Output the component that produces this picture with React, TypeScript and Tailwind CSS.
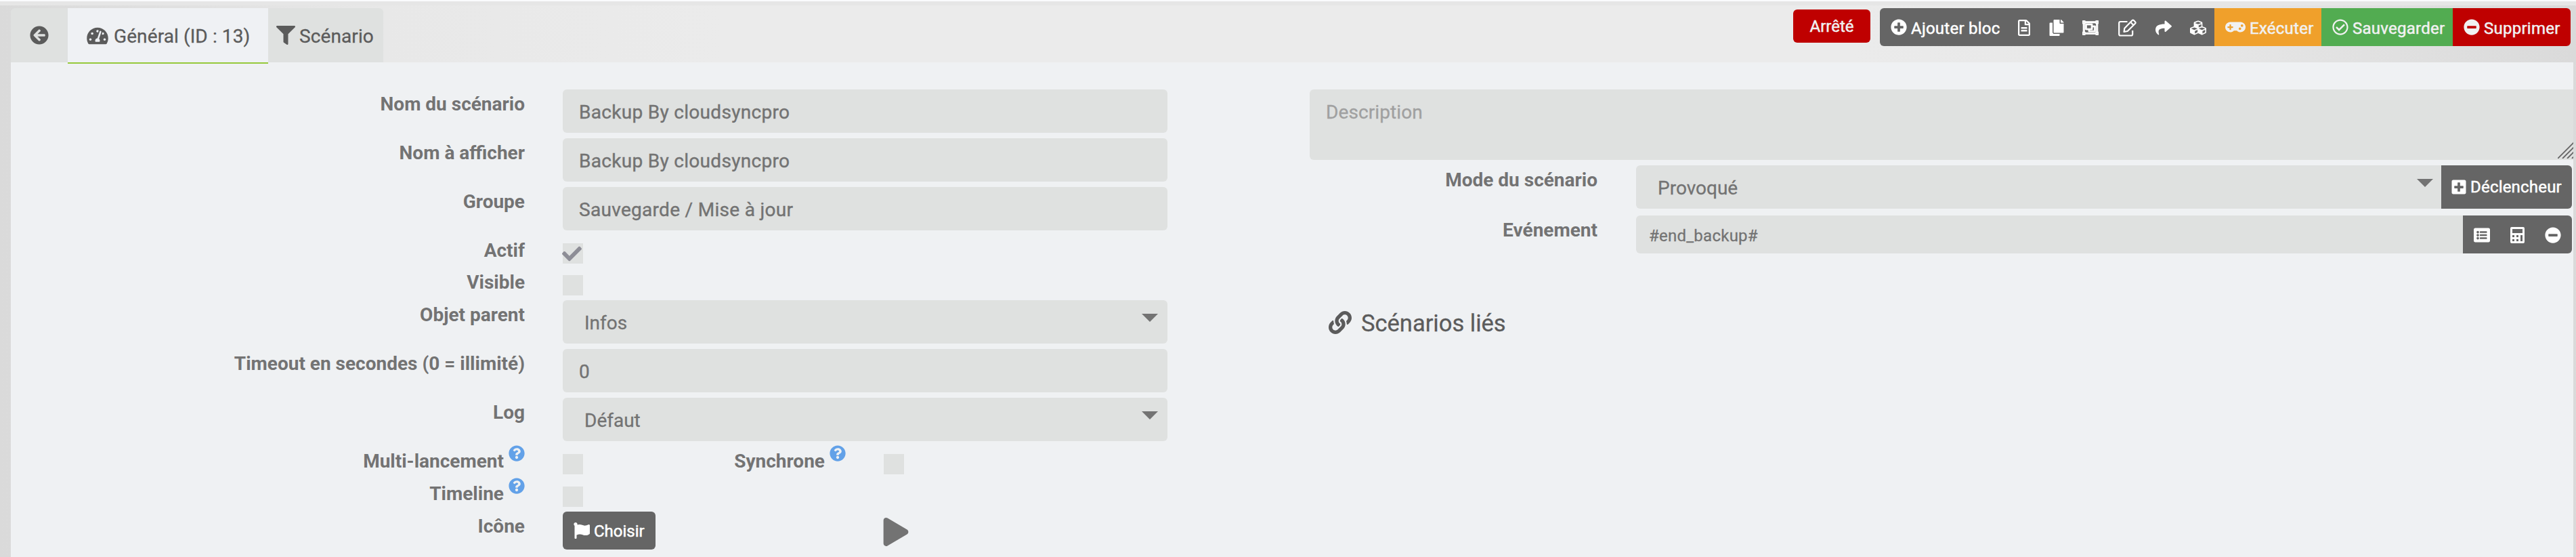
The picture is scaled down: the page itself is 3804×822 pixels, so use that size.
import type { ReactNode } from 'react';
import {
  FaArrowCircleLeft, FaTachometerAlt, FaFilter, FaPlusCircle, FaRegFileAlt, FaCopy, FaRegObjectGroup,
  FaShare, FaCubes, FaGamepad, FaRegCheckCircle, FaMinusCircle, FaQuestionCircle, FaFlag, FaPlay,
  FaPlusSquare, FaListAlt, FaLink, FaCheck,
} from 'react-icons/fa';

function EditIcon() {
  return (
    <svg viewBox="0 0 27 26" className="h-[26px] w-[27px]" fill="none" stroke="currentColor" strokeWidth="2.2" strokeLinejoin="round">
      <path d="M13.5 4H3.2Q1.2 4 1.2 6v16.500Q1.200 24.500 3.200 24.500h16Q21.200 24.500 21.200 22.500V17" />
      <path d="M8.500 18.800l.8-5L20.500 2.300q1.300-1.200 2.600 0l1.900 1.900q1.200 1.300 0 2.600L13.700 18z" />
      <path d="M18.300 4.800l4.400 4.400" />
    </svg>
  );
}

function CalcIcon() {
  return (
    <svg viewBox="0 0 21 24" className="h-6 w-[21px]" fill="currentColor" fillRule="evenodd">
      <path d="M2 0h17q2 0 2 2v20q0 2-2 2H2q-2 0-2-2V2Q0 0 2 0zM3 3v6h15V3zM3 12v3h3v-3zM9 12v3h3v-3zM15 12v9h3v-9zM3 18v3h3v-3zM9 18v3h3v-3z" />
    </svg>
  );
}

function Row({ label, h, help, children }: { label: string; h: string; help?: boolean; children?: ReactNode }) {
  return (
    <div className={`flex ${h}`}>
      <div className="flex w-[759px] shrink-0 justify-end gap-[7px] text-[28px] leading-[43px] font-bold">
        <span>{label}</span>
        {help && <FaQuestionCircle className="-mt-[2px] size-6 text-[#62a1e8]" />}
      </div>
      <div className="ml-14 flex w-[893px] items-start">{children}</div>
    </div>
  );
}

function Input({ children }: { children: ReactNode }) {
  return (
    <div className="h-16 w-full rounded-md bg-[#dfe1e0] px-6 pt-[2px] text-[28px] leading-[63px] tracking-[0.3px] [-webkit-text-stroke:0.4px]">
      {children}
    </div>
  );
}

function Select({ children }: { children: ReactNode }) {
  return (
    <div className="flex h-16 w-full justify-between rounded-md bg-[#dfe1e0] pt-[2px] pr-[14px] pl-8 text-[28px] leading-[63px] [-webkit-text-stroke:0.3px]">
      <span>{children}</span>
      <Caret />
    </div>
  );
}

function Caret() {
  return (
    <svg viewBox="0 0 24 12" className="mt-[18px] h-3 w-6" fill="currentColor">
      <path d="M0 0h24L12 12z" />
    </svg>
  );
}

function Box({ on }: { on?: boolean }) {
  return (
    <div className="mt-[11px] flex size-[30px] shrink-0 items-center bg-[#dfe1e0]">
      {on && <FaCheck className="-ml-[1px] size-[29px] text-[#8d8d96]" />}
    </div>
  );
}

export default function App() {
  return (
    <div className="flex h-[822px] w-[3804px] flex-col overflow-hidden bg-[linear-gradient(to_right,#dadada_0%,#e8e8e8_15%,#ebebeb_28%,#ebebeb_72%,#e6e6e6_86%,#dadada_100%)] font-[Roboto,sans-serif] text-[#737373]">
      <div className="h-2 shrink-0 border-t-2 border-[#fafbfd] bg-[#e6e6e6]" />
      <div className="flex h-[84px] shrink-0 items-start pt-1 pr-2 pl-4">
        <div className="flex text-[28px] tracking-[0.1px] text-[#5b5b5b]">
          <div className="flex h-20 w-21 items-center justify-center rounded-tl-md bg-[#dfe1e0]">
            <FaArrowCircleLeft className="size-7" />
          </div>
          <div className="relative z-10 flex h-[82px] w-[296px] items-center gap-2 border-b-2 border-[#96c93a] bg-[#eff1f4] pt-[1px] pl-7">
            <FaTachometerAlt className="h-7 w-8" />
            <span className="pt-[2px] [-webkit-text-stroke:0.3px]">Général (ID : 13)</span>
          </div>
          <div className="flex h-20 w-[170px] items-center gap-[6px] rounded-tr-md bg-[#dfe1e0] pl-3">
            <FaFilter className="size-7" />
            <span className="pt-[3px] [-webkit-text-stroke:0.3px]">Scénario</span>
          </div>
        </div>

        <div className="ml-auto flex items-start text-[24px] tracking-[0.25px] text-[#f1f1f1] [-webkit-text-stroke:0.5px]">
          <div className="mt-[2px] mr-[14px] h-[49px] w-[114px] rounded-md bg-[#bf0000] text-center leading-[51px] tracking-normal">Arrêté</div>
          <div className="flex h-14 overflow-hidden rounded-md">
            <div className="flex w-[188px] items-center gap-[6px] bg-[#656565] pl-4 text-white">
              <FaPlusCircle className="size-6" />
              <span className="pt-[3px]">Ajouter bloc</span>
            </div>
            <div className="flex items-center bg-[#656565] pt-[1px] text-white">
              <div className="flex w-[49px] justify-center"><FaRegFileAlt className="size-6" /></div>
              <div className="flex w-[47px] justify-center"><FaCopy className="size-6" /></div>
              <div className="flex w-[54px] justify-center"><FaRegObjectGroup className="size-6" stroke="currentColor" strokeWidth="18" /></div>
              <div className="flex w-[54px] justify-center"><EditIcon /></div>
              <div className="flex w-[53px] justify-center"><FaShare className="size-6" /></div>
              <div className="flex w-[49px] justify-center"><FaCubes className="size-6" /></div>
            </div>
            <div className="flex w-[158px] items-center gap-[6px] bg-[#f0a02b] pl-4">
              <FaGamepad className="h-6 w-[30px]" />
              <span className="pt-[3px]">Exécuter</span>
            </div>
            <div className="flex w-[194px] items-center gap-[6px] bg-[#52ac51] pl-4">
              <FaRegCheckCircle className="size-6" />
              <span className="pt-[3px]">Sauvegarder</span>
            </div>
            <div className="flex w-[174px] items-center gap-[6px] bg-[#bf0000] pl-4">
              <FaMinusCircle className="size-6" />
              <span className="pt-[3px]">Supprimer</span>
            </div>
          </div>
        </div>
      </div>

      <div className="mr-1 ml-4 flex flex-1 bg-[#eff1f3] pt-10">
        <div className="w-[1708px] shrink-0">
          <Row label="Nom du scénario" h="h-[72px]"><Input>Backup By cloudsyncpro</Input></Row>
          <Row label="Nom à afficher" h="h-[72px]"><Input>Backup By cloudsyncpro</Input></Row>
          <Row label="Groupe" h="h-[72px]"><Input>Sauvegarde / Mise à jour</Input></Row>
          <Row label="Actif" h="h-[47px]"><Box on /></Row>
          <Row label="Visible" h="h-[48px]"><Box /></Row>
          <Row label="Objet parent" h="h-[72px]"><Select>Infos</Select></Row>
          <Row label="Timeout en secondes (0 = illimité)" h="h-[72px]"><Input>0</Input></Row>
          <Row label="Log" h="h-[72px]"><Select>Défaut</Select></Row>
          <Row label="Multi-lancement" h="h-[48px]" help>
            <Box />
            <div className="flex w-[388px] shrink-0 justify-end gap-[7px] text-[28px] leading-[43px] font-bold">
              <span>Synchrone</span>
              <FaQuestionCircle className="-mt-[2px] size-6 text-[#62a1e8]" />
            </div>
            <div className="ml-14"><Box /></div>
          </Row>
          <Row label="Timeline" h="h-[48px]" help><Box /></Row>
          <Row label="Icône" h="h-[67px]">
            <div className="flex h-14 w-[137px] shrink-0 items-center gap-[6px] rounded-md bg-[#656565] pl-4 text-[24px] text-white [-webkit-text-stroke:0.5px]">
              <FaFlag className="size-6" />
              <span className="pt-[2px]">Choisir</span>
            </div>
            <FaPlay className="mt-[9px] ml-[334px] h-[42px] w-[42px]" />
          </Row>
        </div>

        <div className="ml-[210px] flex min-w-0 flex-1 flex-col">
          <div className="flex h-[104px] items-end justify-between rounded-l-md bg-[#dfe1e0] pl-6 text-[28px] text-[#a0a0a0]">
            <span className="h-[102px] leading-[63px] tracking-[0.1px] [-webkit-text-stroke:0.3px]">Description</span>
            <svg viewBox="0 0 23 24" className="mb-[2px] h-6 w-[23px] text-[#656565]" stroke="currentColor" strokeWidth="1.8">
              <path d="M0 24L24 0M7 24L31 0M14 24L38 0M21 24L45 0" />
            </svg>
          </div>
          <div className="mt-2 flex">
            <div className="w-[425px] shrink-0 text-right text-[28px] leading-[43px] font-bold">Mode du scénario</div>
            <div className="ml-[57px] flex h-16 w-[1189px] shrink-0 justify-between rounded-l-md bg-[#dfe1e0] pt-[2px] pr-3 pl-8 text-[28px] leading-[63px] [-webkit-text-stroke:0.3px]">
              <span>Provoqué</span>
              <Caret />
            </div>
            <div className="flex h-16 w-[193px] shrink-0 items-center gap-[5px] rounded-r-md bg-[#656565] pl-[14px] text-[24px] tracking-[0.2px] text-white [-webkit-text-stroke:0.5px]">
              <FaPlusSquare className="size-6" />
              <span>Déclencheur</span>
            </div>
          </div>
          <div className="mt-[10px] flex">
            <div className="w-[425px] shrink-0 text-right text-[28px] leading-[43px] font-bold">Evénement</div>
            <div className="ml-[57px] h-14 w-[1221px] shrink-0 rounded-l-md bg-[#dfe1e0] pt-[2px] pl-[19px] text-[24px] leading-[56px] tracking-[0.25px] [-webkit-text-stroke:0.3px]">#end_backup#</div>
            <div className="flex h-14 w-[161px] shrink-0 items-center rounded-r-md bg-[#656565] pt-[2px] pl-4 text-white">
              <FaListAlt className="size-6" />
              <div className="ml-[30px]"><CalcIcon /></div>
              <FaMinusCircle className="ml-[30px] size-6" />
            </div>
          </div>
          <div className="mt-[76px] ml-7 flex items-center gap-[14px] text-[34.5px] leading-[50px] text-[#5b5b5b]">
            <FaLink className="size-[34px]" />
            <span className="pt-[2px] [-webkit-text-stroke:0.3px]">Scénarios liés</span>
          </div>
        </div>
      </div>
    </div>
  );
}
